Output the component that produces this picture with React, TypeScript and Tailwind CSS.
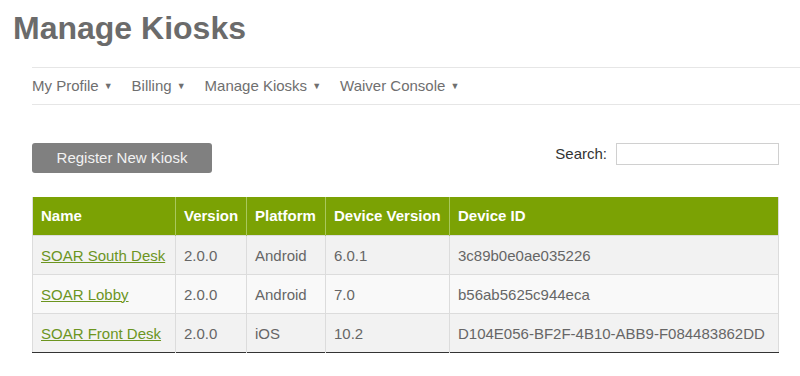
import React from 'react'

const navItems = ['My Profile', 'Billing', 'Manage Kiosks', 'Waiver Console']

const kiosks = [
  { name: 'SOAR South Desk', version: '2.0.0', platform: 'Android', deviceVersion: '6.0.1', deviceId: '3c89b0e0ae035226' },
  { name: 'SOAR Lobby', version: '2.0.0', platform: 'Android', deviceVersion: '7.0', deviceId: 'b56ab5625c944eca' },
  { name: 'SOAR Front Desk', version: '2.0.0', platform: 'iOS', deviceVersion: '10.2', deviceId: 'D104E056-BF2F-4B10-ABB9-F084483862DD' },
]

const headers = ['Name', 'Version', 'Platform', 'Device Version', 'Device ID']

export default function App() {
  return (
    <div className="w-[800px] h-[376px] overflow-hidden bg-white font-['Liberation_Sans',Arial,sans-serif] text-[15px] text-[#666]">
      <h1 className="pl-[13px] pt-3 text-[32px] leading-none font-bold text-[#6b6b6b]">Manage Kiosks</h1>

      {/* sub nav */}
      <nav className="ml-8 mt-[23px] h-[38px] flex items-center border-y border-[#e6e6e6]">
        {navItems.map((item) => (
          <div key={item} className="flex items-center mr-[19px] text-[#6f6f6f]">
            <span>{item}</span>
            <span className="ml-[5px] text-[9px] leading-none">▼</span>
          </div>
        ))}
      </nav>

      <div className="ml-8 w-[747px]">
        <div className="mt-[38px] flex justify-between items-start">
          <button className="w-[180px] h-[30px] rounded-[3px] bg-[#808080] text-[#f2f2f2]">
            Register New Kiosk
          </button>
          <label className="flex items-center text-[#333]">
            Search:
            <input className="ml-[9px] w-[163px] h-[22px] border border-[#d0d0d0] bg-white" />
          </label>
        </div>

        <table className="mt-6 w-full table-fixed border-collapse border-x border-[#dcdcdc] border-b border-b-[#333]">
          <colgroup>
            <col className="w-[143px]" />
            <col className="w-[71px]" />
            <col className="w-[79px]" />
            <col className="w-[124px]" />
            <col />
          </colgroup>
          <thead>
            <tr className="bg-[#7ba204] h-[38px]">
              {headers.map((h, i) => (
                <th
                  key={h}
                  className={`text-left font-bold text-white px-2 pt-[1px] whitespace-nowrap ${i > 0 ? 'border-l border-[#a9c85c]' : ''}`}
                >
                  {h}
                </th>
              ))}
            </tr>
          </thead>
          <tbody>
            {kiosks.map((k, i) => (
              <tr key={k.deviceId} className={`h-[39px] border-t border-[#dcdcdc] ${i % 2 === 1 ? 'bg-[#f9f9f9]' : 'bg-[#f2f2f2]'}`}>
                <td className="px-2 pt-[3px] whitespace-nowrap">
                  <a href="#" className="underline text-[#6c951f]">{k.name}</a>
                </td>
                <td className="px-2 pt-[3px] border-l border-[#dcdcdc]">{k.version}</td>
                <td className="px-2 pt-[3px] border-l border-[#dcdcdc]">{k.platform}</td>
                <td className="px-2 pt-[3px] border-l border-[#dcdcdc]">{k.deviceVersion}</td>
                <td className="px-2 pt-[3px] border-l border-[#dcdcdc] whitespace-nowrap">{k.deviceId}</td>
              </tr>
            ))}
          </tbody>
        </table>
      </div>
    </div>
  )
}
